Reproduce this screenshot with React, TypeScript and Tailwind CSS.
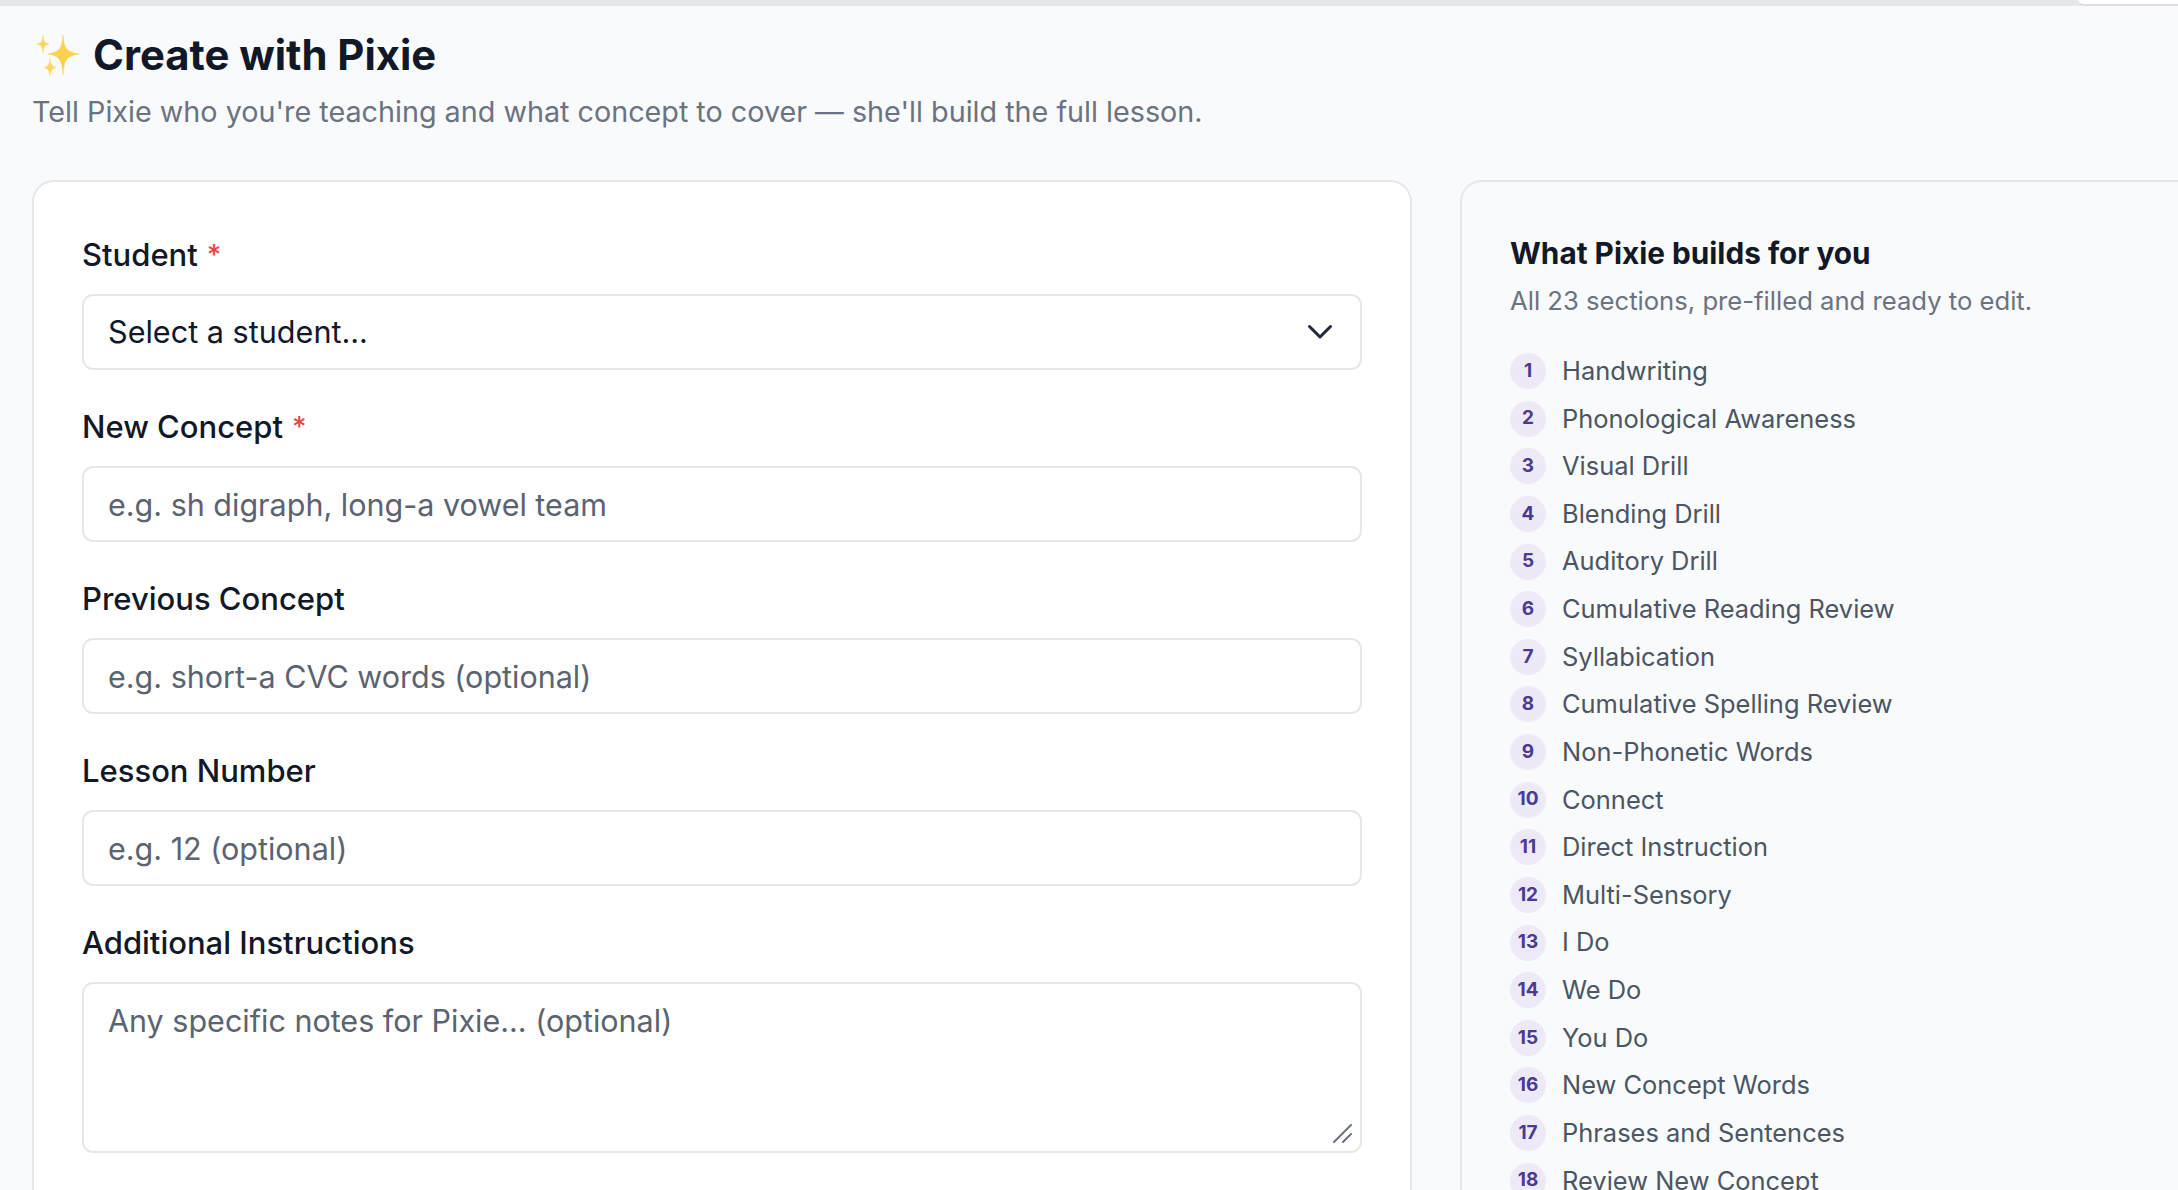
const sections = ["Handwriting","Phonological Awareness","Visual Drill","Blending Drill","Auditory Drill","Cumulative Reading Review","Syllabication","Cumulative Spelling Review","Non-Phonetic Words","Connect","Direct Instruction","Multi-Sensory","I Do","We Do","You Do","New Concept Words","Phrases and Sentences","Review New Concept"];

function Sparkles() {
  return (
    <svg width="44" height="44" viewBox="0 0 44 44" className="shrink-0 ml-[4px]">
      <path d="M27 2 C28 15 30 19 43 21 C30 23 28 27 27 42 C26 27 24 23 12 21 C24 19 26 15 27 2Z" fill="#fdd14f" stroke="#fdd14f" strokeWidth="0.6" />
      <path d="M7 2 C7.5 8 8.5 10 13 11 C8.5 12 7.5 14 7 20 C6.5 14 5.5 12 1 11 C5.5 10 6.5 8 7 2Z" fill="#fdd663" stroke="#fdd663" strokeWidth="0.5" />
      <path d="M14 26 C14.5 31 15.5 33 20 34.5 C15.5 36 14.5 38 14 43 C13.5 38 12.5 36 8 34.5 C12.5 33 13.5 31 14 26Z" fill="#fdd663" stroke="#fdd663" strokeWidth="0.5" />
    </svg>
  );
}

function Label({ text, required }: { text: string; required?: boolean }) {
  return (
    <div className="h-[40px] mb-[19px] flex items-center text-[31px] font-medium text-[#111827]">
      <span>{text}</span>
      {required && <span className="ml-[9px] text-[#ef4444] text-[28px]">*</span>}
    </div>
  );
}

function Field({ label, placeholder, required }: { label: string; placeholder: string; required?: boolean }) {
  return (
    <div className="mb-[37px]">
      <Label text={label} required={required} />
      <input
        placeholder={placeholder}
        className="block w-full h-[76px] px-[24px] bg-white border-2 border-[#e5e7eb] rounded-[11px] text-[30.5px] text-[#111827] placeholder:text-[#5b6370] outline-none"
      />
    </div>
  );
}

export default function App() {
  return (
    <div className="h-[1190px] w-[2178px] overflow-hidden bg-[#f9fafb] font-['Inter',sans-serif] relative">
      <div className="h-[6px] bg-[#e5e7eb]" />
      <div className="absolute top-0 right-0 w-[100px] h-[6px] bg-white border-b-2 border-[#dcdee2] rounded-bl-[14px]" />
      <div className="pl-[32px]">
        <div className="flex items-center h-[56px] mt-[21px] gap-[13px]">
          <Sparkles />
          <h1 className="text-[41.8px] font-bold text-[#111827]">Create with Pixie</h1>
        </div>
        <p className="mt-[9px] text-[28.74px] leading-[40px] text-[#6b7280]">Tell Pixie who you're teaching and what concept to cover — she'll build the full lesson.</p>
        <div className="flex mt-[48px] gap-[48px] items-start">
          <div className="w-[1380px] h-[1100px] shrink-0 bg-white border-2 border-[#e5e7eb] rounded-[22px] px-[48px] pt-[53px]">
            <div className="mb-[37px]">
              <Label text="Student" required />
              <div className="relative">
                <select className="block w-full h-[76px] px-[24px] appearance-none bg-white border-2 border-[#e5e7eb] rounded-[11px] text-[30.6px] text-[#111827] outline-none">
                  <option>Select a student...</option>
                </select>
                <svg viewBox="0 0 24 24" fill="none" stroke="#1f2937" strokeWidth="2" strokeLinecap="round" strokeLinejoin="round" className="absolute right-[24px] top-[19px] w-[36px] h-[36px]">
                  <path d="M5 9l7 7 7-7" />
                </svg>
              </div>
            </div>
            <Field label="New Concept" placeholder="e.g. sh digraph, long-a vowel team" required />
            <Field label="Previous Concept" placeholder="e.g. short-a CVC words (optional)" />
            <Field label="Lesson Number" placeholder="e.g. 12 (optional)" />
            <div>
              <Label text="Additional Instructions" />
              <div className="relative">
                <textarea
                  placeholder="Any specific notes for Pixie... (optional)"
                  className="block w-full h-[171px] px-[24px] py-[14px] resize-none bg-white border-2 border-[#e5e7eb] rounded-[11px] text-[30.5px] text-[#111827] placeholder:text-[#5b6370] outline-none"
                />
                <svg viewBox="0 0 20 20" fill="none" stroke="#6b7280" strokeWidth="2" strokeLinecap="round" className="absolute right-[9px] bottom-[9px] w-[20px] h-[20px]">
                  <path d="M1 18L18 1M10 18L18 10" />
                </svg>
              </div>
            </div>
          </div>
          <div className="w-[800px] h-[1100px] shrink-0 bg-[#f9fafb] border-2 border-[#e5e7eb] rounded-[22px] px-[48px] pt-[53px]">
            <h2 className="text-[29.75px] font-bold text-[#111827] leading-[36px]">What Pixie builds for you</h2>
            <p className="mt-[12px] text-[25.65px] text-[#6b7280] leading-[36px]">All 23 sections, pre-filled and ready to edit.</p>
            <ol className="mt-[34px] flex flex-col gap-[11.63px]">
              {sections.map((s, i) => (
                <li key={s} className="flex items-center gap-[16px] h-[36px]">
                  <span className="w-[36px] h-[36px] rounded-full bg-[#ede9f7] text-[#4c3a92] text-[19px] font-bold flex items-center justify-center shrink-0">{i + 1}</span>
                  <span className="text-[25.45px] text-[#4b5563]">{s}</span>
                </li>
              ))}
            </ol>
          </div>
        </div>
      </div>
    </div>
  );
}
